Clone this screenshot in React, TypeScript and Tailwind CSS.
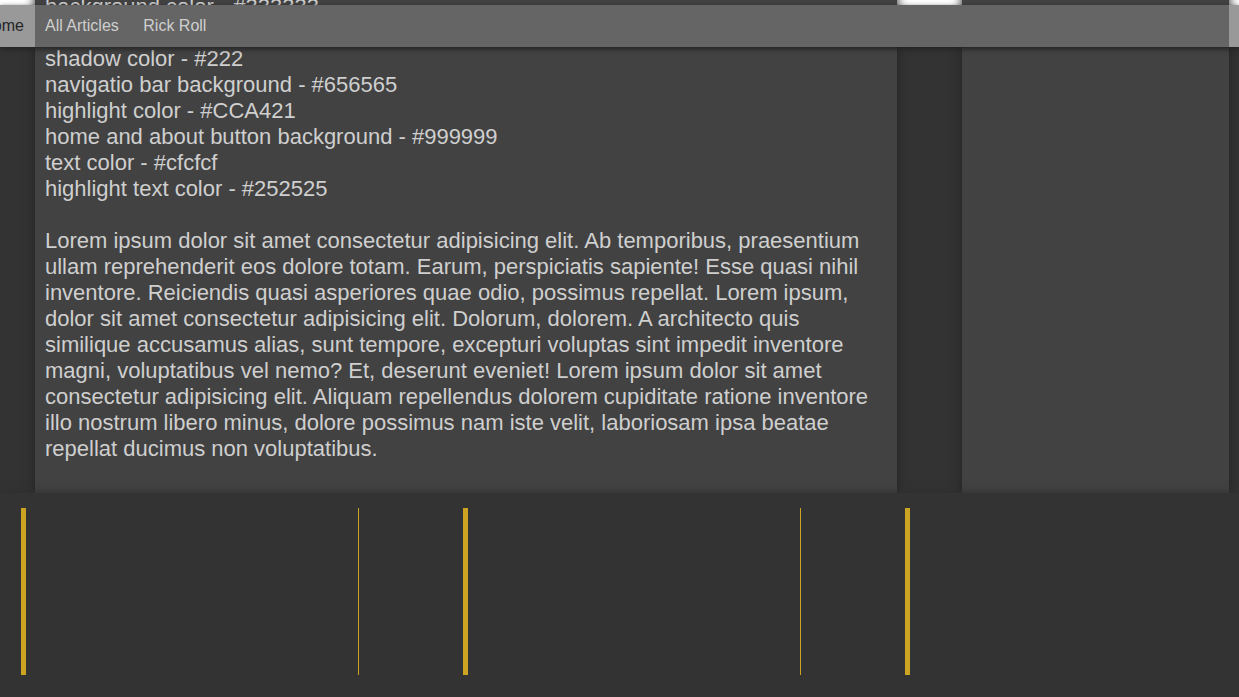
import React from "react";

const colorNotes = [
  "background color - #333333",
  "article background - #424242",
  "shadow color - #222",
  "navigatio bar background - #656565",
  "highlight color - #CCA421",
  "home and about button background - #999999",
  "text color - #cfcfcf",
  "highlight text color - #252525",
];

const lorem =
  "Lorem ipsum dolor sit amet consectetur adipisicing elit. Ab temporibus, praesentium ullam reprehenderit eos dolore totam. Earum, perspiciatis sapiente! Esse quasi nihil inventore. Reiciendis quasi asperiores quae odio, possimus repellat. Lorem ipsum, dolor sit amet consectetur adipisicing elit. Dolorum, dolorem. A architecto quis similique accusamus alias, sunt tempore, excepturi voluptas sint impedit inventore magni, voluptatibus vel nemo? Et, deserunt eveniet! Lorem ipsum dolor sit amet consectetur adipisicing elit. Aliquam repellendus dolorem cupiditate ratione inventore illo nostrum libero minus, dolore possimus nam iste velit, laboriosam ipsa beatae repellat ducimus non voluptatibus.";

const Navbar = () => {
  return (
    <nav className="absolute top-[5px] left-0 right-0 z-20 h-[42px] bg-[#656565] shadow-[0_2px_5px_#222]">
      <div className="flex h-full w-[1324px] -ml-[31px] items-stretch text-[16px] text-[#cfcfcf]">
        <a className="flex w-[66px] items-center justify-end pr-[11px] bg-[#999999] text-[#252525]">
          Home
        </a>
        <a className="flex items-center px-[10px]">All Articles</a>
        <a className="flex items-center px-[10px] ml-[4.5px]">Rick Roll</a>
        <a className="ml-auto flex w-[64px] items-center justify-center bg-[#999999] text-[#252525]">
          About
        </a>
      </div>
    </nav>
  );
};

const App = () => {
  return (
    <div
      className="relative h-[697px] w-[1239px] overflow-hidden bg-[#333333]"
      style={{ fontFamily: '"Liberation Sans", Arial, sans-serif' }}
    >
      <Navbar />

      <main className="-mt-[16px] flex h-[509px] gap-[65px] pl-[35px] bg-[linear-gradient(to_bottom,#ffffff_0,#ffffff_24px,#333333_26px)]">
        <article className="w-[862px] bg-[#424242] px-[10px] pt-[10px] text-[22px] leading-[26px] text-[#cfcfcf] shadow-[0_0_10px_#222]">
          {colorNotes.map((note, index) => (
            <div key={index}>{note}</div>
          ))}
          <p className="mt-[26px]">{lorem}</p>
        </article>
        <aside className="w-[267px] bg-[#424242] shadow-[0_0_10px_#222]"></aside>
      </main>

      <footer className="relative z-10 flex h-[204px] gap-[104px] bg-[#333333] pl-[21px] pt-[15px] shadow-[0_0_8px_#2e2e2e]">
        {[0, 1, 2].map((col) => (
          <div
            key={col}
            className="h-[167px] w-[338px] shrink-0 border-l-[5px] border-r border-[#CCA421]"
          ></div>
        ))}
      </footer>
    </div>
  );
};

export default App;
